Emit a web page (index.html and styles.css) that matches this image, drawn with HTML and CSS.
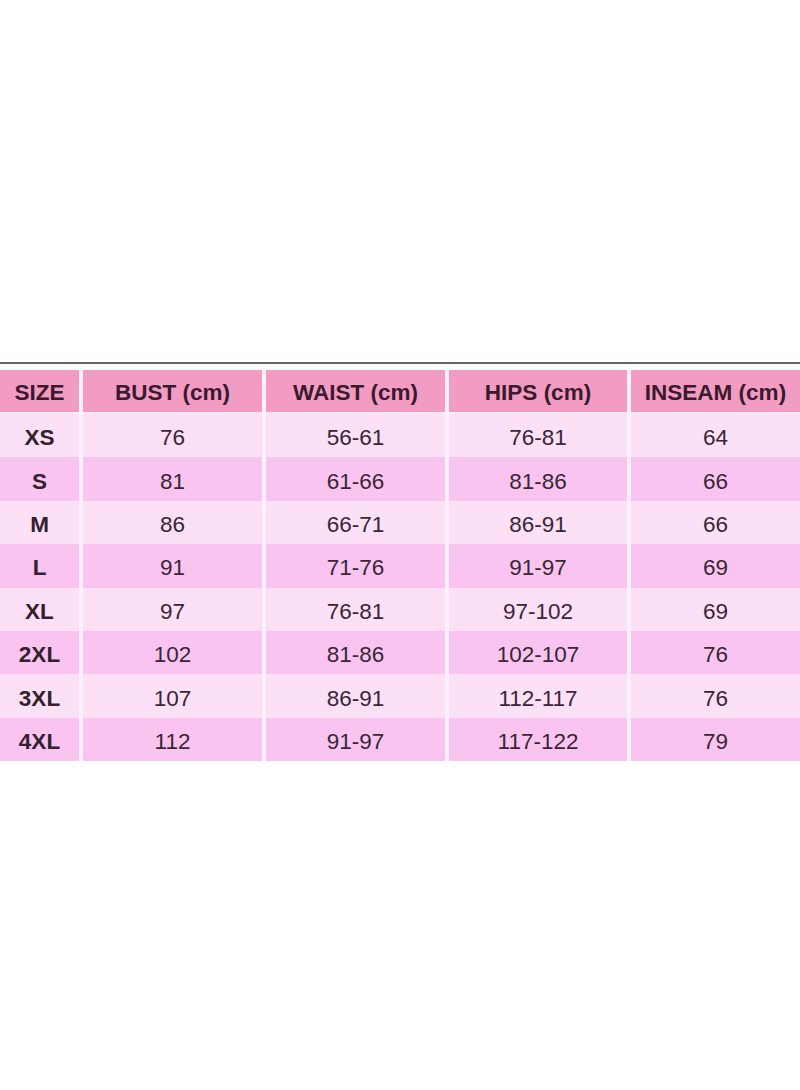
FILE: index.html
```html
<!DOCTYPE html>
<html>
<head>
<meta charset="utf-8">
<link rel="stylesheet" href="styles.css">
</head>
<body>
<div class="page">
  <div class="rule"></div>
  <div class="chart">
    <div class="cell head">SIZE</div>
    <div class="cell head">BUST (cm)</div>
    <div class="cell head">WAIST (cm)</div>
    <div class="cell head">HIPS (cm)</div>
    <div class="cell head">INSEAM (cm)</div>

    <div class="cell size light">XS</div><div class="cell light">76</div><div class="cell light">56-61</div><div class="cell light">76-81</div><div class="cell light">64</div>
    <div class="cell size dark">S</div><div class="cell dark">81</div><div class="cell dark">61-66</div><div class="cell dark">81-86</div><div class="cell dark">66</div>
    <div class="cell size light">M</div><div class="cell light">86</div><div class="cell light">66-71</div><div class="cell light">86-91</div><div class="cell light">66</div>
    <div class="cell size dark">L</div><div class="cell dark">91</div><div class="cell dark">71-76</div><div class="cell dark">91-97</div><div class="cell dark">69</div>
    <div class="cell size light">XL</div><div class="cell light">97</div><div class="cell light">76-81</div><div class="cell light">97-102</div><div class="cell light">69</div>
    <div class="cell size dark">2XL</div><div class="cell dark">102</div><div class="cell dark">81-86</div><div class="cell dark">102-107</div><div class="cell dark">76</div>
    <div class="cell size light">3XL</div><div class="cell light">107</div><div class="cell light">86-91</div><div class="cell light">112-117</div><div class="cell light">76</div>
    <div class="cell size dark">4XL</div><div class="cell dark">112</div><div class="cell dark">91-97</div><div class="cell dark">117-122</div><div class="cell dark">79</div>
  </div>
</div>
</body>
</html>
```
FILE: styles.css
```css
html, body {
  margin: 0;
  padding: 0;
  background: #ffffff;
}
.page {
  width: 800px;
  height: 1090px;
  padding-top: 362px;
  box-sizing: border-box;
  font-family: "Liberation Sans", Arial, sans-serif;
}
.rule {
  height: 2px;
  background: #6a6468;
}
.chart {
  margin-top: 6px;
  display: grid;
  grid-template-columns: 79px 179px 179px 178px 169px;
  grid-template-rows: 44px repeat(8, 43.4px);
  column-gap: 4px;
  row-gap: 0;
  background: #fcf1fa;
}
.cell {
  display: flex;
  align-items: center;
  justify-content: center;
  font-size: 22.5px;
  color: #3a2634;
  padding-top: 5px;
  box-sizing: border-box;
}
.head {
  background: #f39cc3;
  font-weight: bold;
  color: #3a1a2c;
  border-bottom: 2px solid #fbe6f4;
  padding-top: 4px;
}
.size {
  font-weight: bold;
  color: #34202e;
}
.light {
  background: #fbe0f6;
}
.dark {
  background: #f9c5f0;
}
```
